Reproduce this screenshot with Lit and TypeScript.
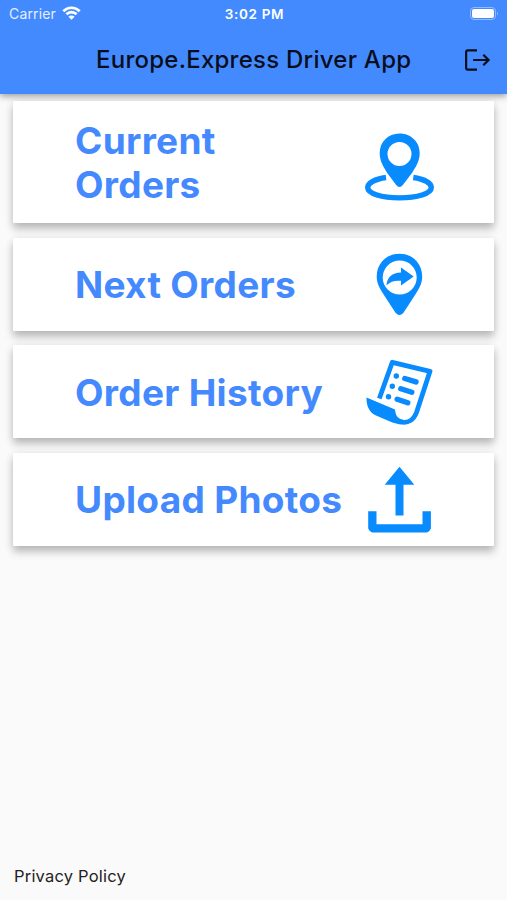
import { LitElement, html, css, svg } from "lit";
import { customElement, property } from "lit/decorators.js";

const icons: Record<string, unknown> = {
  location: svg`
    <path fill-rule="evenodd" d="M34.5 1.5C23 1.5 14.7 10 14.7 21c0 8 3.6 13.500 7.500 20l8.800 11.700q3.500 4.400 7 0L47 41c4-6.500 7.700-12 7.700-20 0-11-8.500-19.500-20.200-19.500zm0 8.500a12 12 0 1 1 0 24 12 12 0 0 1 0-24z"/>
    <path fill="none" stroke="currentColor" stroke-width="5.400" d="M21 45.500C10 47 2.700 51 2.700 55.600c0 6 14 10.300 31.800 10.300s31.800-4.300 31.800-10.300c0-4.600-7-8.600-18-10.100"/>`,
  next: svg`
    <path fill-rule="evenodd" d="M34.500 2.700C21.500 2.700 11.700 12.500 11.700 25.500c0 7 3 11.500 6.300 17l12.500 19.200q4 4.800 8 0L51 42.500c3.300-5.500 6.200-10 6.200-17 0-13-9.700-22.800-22.700-22.800zm.2 6.800a17 17 0 1 1 0 34 17 17 0 0 1 0-34z"/>
    <path d="M36 16.500 48.700 25.500 36 34.500V29.800c-6.500-.5-10 .5-14.500 4.500C22 26.500 27 21.500 36 21.500z"/>`,
  history: svg`
    <path fill="none" stroke="currentColor" stroke-width="4.800" stroke-linejoin="round" d="M14.300 41.500 27.300 5.300 65 14.300 51.500 55.500C48.700 63 43 66.300 36.500 65"/>
    <path d="M1.500 40.500 30 52.500C30.500 58 32.500 62 38 62.600L37 67.500C33 67.300 29.500 66.300 25 64.500L11 58.600C4.500 55.500 1.200 49 1.500 40.500z"/>
    <g fill="none" stroke="currentColor" stroke-width="5.400" stroke-linecap="round">
      <path d="M31.300 19h.01M27.300 29.300h.01M23.500 39.700h.01M39.800 21.500 51 24.900M35.800 31.800l11 3.500M32.200 42.200l10.500 3.600"/>
    </g>`,
  upload: svg`
    <path d="M34.500 2.700 49.300 20.800H38.500V51.500h-8V20.800H19.700z"/>
    <path d="M3.200 47.200h8.300v13H57.500v-13H65.900V64.500q-1 3-4 3.900H7.200q-3-.9-4-3.900z"/>`,
};

@customElement("order-card")
class OrderCard extends LitElement {
  @property() label = "";
  @property() icon = "";
  static styles = css`
    :host {
      display: flex;
      justify-content: space-between;
      align-items: center;
      box-sizing: border-box;
      min-height: 93px;
      padding: 18px 59px 16px 62px;
      background: #fff;
      border-radius: 1px;
      box-shadow: 0 6px 8px rgba(0, 0, 0, 0.23), 0 1px 9px rgba(0, 0, 0, 0.09);
      color: #4489fe;
      font: 700 37px/44px Inter, sans-serif;
    }
    .label {
      flex: 0 1 280px;
      letter-spacing: 0.3px;
    }
    .long {
      flex-basis: 200px;
    }
    .icon {
      flex: none;
      display: block;
      width: 70px;
      height: 70px;
      margin: -7px 0 -5px;
      color: #078bff;
      fill: currentColor;
    }
    .low {
      margin: 3px 0 -5px;
    }
    .mid {
      margin: -6px 0 -7px;
    }
  `;
  render() {
    const first = this.icon === "location";
    return html`<span class="label ${first ? "long" : ""}">${this.label}</span>
      <svg class="icon ${first ? "low" : this.icon === "next" ? "mid" : ""}" viewBox="0 0 70 70">${icons[this.icon]}</svg>`;
  }
}

@customElement("app-root")
class AppRoot extends LitElement {
  static styles = css`
    :host {
      display: flex;
      flex-direction: column;
      height: 900px;
      background: #fafafa;
      font-family: Inter, sans-serif;
      overflow: hidden;
    }
    .header {
      flex: none;
      height: 94px;
      background: #448aff;
      box-shadow: 0 2px 7px rgba(0, 0, 0, 0.4);
    }
    .status {
      display: grid;
      grid-template-columns: 1fr auto 1fr;
      align-items: center;
      height: 27px;
      padding: 0 7px 0 9px;
      color: #fff;
      font-size: 14px;
    }
    .carrier {
      display: flex;
      align-items: center;
      gap: 6px;
      color: #e5efff;
      letter-spacing: 0.15px;
    }
    .wifi { width: 19px; height: 15px; }
    .time { font-weight: 600; font-size: 13.5px; letter-spacing: 0.65px; }
    .battery { width: 31px; height: 15px; justify-self: end; }
    .toolbar {
      display: grid;
      grid-template-columns: 96px 1fr 43px;
      align-items: center;
      height: 65px;
      color: #080e1b;
    }
    .title {
      grid-column: 2;
      font-size: 24px;
      font-weight: 450;
      letter-spacing: 0.25px;
      white-space: nowrap;
    }
    .logout { width: 27px; height: 26px; }
    .list {
      display: flex;
      flex-direction: column;
      gap: 14.5px;
      padding: 7px 13px 0;
    }
    .privacy {
      margin: auto 0 0 14px;
      padding-bottom: 14px;
      font-size: 16.500px;
      letter-spacing: 0.2px;
      line-height: 20px;
      color: #222;
    }
  `;
  render() {
    return html`
      <header class="header">
        <div class="status">
          <span class="carrier">Carrier
            <svg class="wifi" viewBox="0 0 19 15" fill="none" stroke="#fff" stroke-width="2.700">
              <path d="M1.300 5.200c4.600-4.600 11.800-4.600 16.400 0M4.400 8.300c2.900-2.900 7.300-2.900 10.200 0"/>
              <path fill="#fff" stroke="none" d="m6.400 10.700c1.800-1.600 4.400-1.600 6.200 0L9.500 13.800z"/>
            </svg>
          </span>
          <span class="time">3:02 PM</span>
          <svg class="battery" viewBox="0 0 31 15">
            <rect x="1.500" y="1.500" width="25" height="12" rx="3.500" fill="none" stroke="#92baff"/>
            <rect x="3" y="3" width="22" height="9" rx="2" fill="#fff"/>
            <path d="M28 5.500q2 2 0 4z" fill="#92baff"/>
          </svg>
        </div>
        <div class="toolbar">
          <span class="title">Europe.Express Driver App</span>
          <svg class="logout" viewBox="0 0 28 26" fill="none" stroke="currentColor" stroke-width="2.300">
            <path d="M13.500 3H4Q2.200 3 2.200 5v16q0 2 1.800 2h9.500M9.500 13H25M20 7.500l5.500 5.500-5.500 5.500"/>
          </svg>
        </div>
      </header>
      <main class="list">
        <order-card label="Current Orders" icon="location"></order-card>
        <order-card label="Next Orders" icon="next"></order-card>
        <order-card label="Order History" icon="history"></order-card>
        <order-card label="Upload Photos" icon="upload"></order-card>
      </main>
      <footer class="privacy">Privacy Policy</footer>
    `;
  }
}
